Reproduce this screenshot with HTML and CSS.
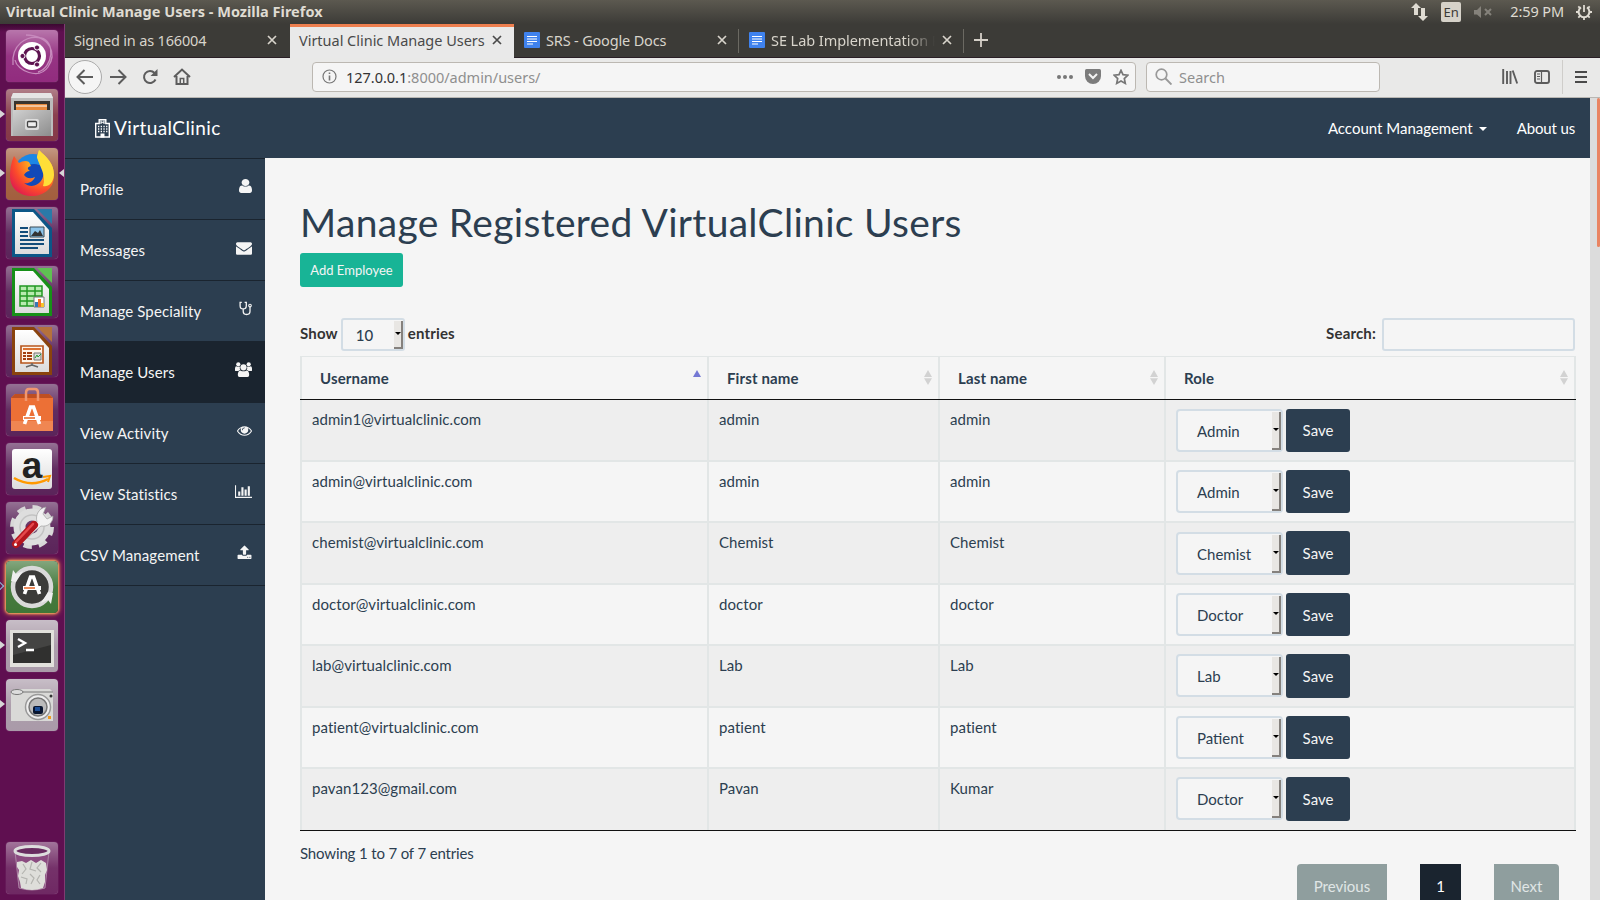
FILE: index.html
```html
<!DOCTYPE html>
<html lang="en">
<head>
<meta charset="utf-8">
<title>Virtual Clinic Manage Users</title>
<link rel="stylesheet" href="styles.css">
</head>
<body>
<svg class="defs" width="0" height="0">
  <defs>
    <linearGradient id="gloss" x1="0" y1="0" x2="0" y2="1"><stop offset="0" stop-color="#fff" stop-opacity=".38"/><stop offset=".5" stop-color="#fff" stop-opacity=".08"/><stop offset="1" stop-color="#fff" stop-opacity=".04"/></linearGradient>
    <linearGradient id="metal" x1="0" y1="0" x2="1" y2="1"><stop offset="0" stop-color="#d0d0d0"/><stop offset="1" stop-color="#8d8d8d"/></linearGradient>
    <linearGradient id="paper" x1="0" y1="0" x2="0" y2="1"><stop offset="0" stop-color="#fff"/><stop offset="1" stop-color="#dcdcdc"/></linearGradient>
    <radialGradient id="fox" cx=".75" cy=".2" r=".9"><stop offset="0" stop-color="#fff04a"/><stop offset=".4" stop-color="#ffa01f"/><stop offset=".75" stop-color="#fb4a2b"/><stop offset="1" stop-color="#e2204c"/></radialGradient>
    <symbol id="x" viewBox="0 0 10 10"><path d="M1 1l8 8M9 1l-8 8" fill="none" stroke="currentColor" stroke-width="1.7"/></symbol>
    <symbol id="doc" viewBox="0 0 16 16"><rect width="16" height="16" rx="1" fill="#3f82ee"/><path d="M3 4.5h10M3 7h10M3 9.5h10M3 12h6" stroke="#fff" stroke-width="1.2"/></symbol>
    <symbol id="sort" viewBox="0 0 8 15"><path d="M4 0l4 7H0zM4 15L0 8.2h8z" fill="#d2d2d2"/></symbol>
  </defs>
</svg>
<header class="panel">
  <span class="window-title">Virtual Clinic Manage Users - Mozilla Firefox</span>
  <div class="tray">
    <svg width="17" height="18" viewBox="0 0 17 18"><path d="M5 0l5 5H7v7H3V5H0zM12 18l-5-5h3V5h4v8h3z" fill="#dfdbd2"/></svg>
    <span class="lang">En</span>
    <svg class="mute" width="18" height="12" viewBox="0 0 18 12"><path d="M0 4h3l4-4v12L3 8.500H0z" fill="#85827b"/><path d="M11 3l6 6M17 3l-6 6" stroke="#85827b" stroke-width="2"/></svg>
    <span class="clock">2:59 PM</span>
    <svg width="16" height="16" viewBox="0 0 16 16" fill="none" stroke="#dfdbd2"><path d="M5 3.300a5.400 5.400 0 1 0 6 0" stroke-width="2"/><path d="M8 1v7M8 13v3M0 8h3M13 8h3M2.300 13.700l2-2M13.700 13.700l-2-2M2.300 2.300l2 2M13.700 2.300l-2 2" stroke-width="1.8"/></svg>
  </div>
</header>
<div class="desktop">
<nav class="launcher">
  <svg class="tile" viewBox="0 0 52 52"><rect width="52" height="52" rx="4" fill="#8d2379"/><rect width="52" height="52" rx="4" fill="url(#gloss)"/><path d="M7 35C5 15 20 5 35 8s12 30-3 34M20 5c25 1 31 19 22 32s-31 4-33-7" fill="none" stroke="#c78abd" stroke-width="1.300"/><circle cx="26" cy="26" r="14" fill="#fff"/><circle cx="26" cy="26" r="7.500" fill="none" stroke="#5d1450" stroke-width="3.200"/><g fill="#5d1450" stroke="#fff" stroke-width="1"><circle cx="16.500" cy="26" r="2.600"/><circle cx="31" cy="17.500" r="2.600"/><circle cx="31" cy="34.500" r="2.600"/></g></svg>
  <svg class="tile" viewBox="0 0 52 52"><rect width="52" height="52" rx="4" fill="#803040"/><rect width="52" height="52" rx="4" fill="url(#gloss)"/><path d="M7 4h38l2 5v38H5V9z" fill="#bcbcbc"/><path d="M7 4h38l2 5H5z" fill="#e5e5e5"/><path d="M8 12h36v11H8z" fill="#39342f"/><path d="M10 15h31v8H10z" fill="#e88a3c"/><path d="M10 17h31" stroke="#fff" stroke-width="1"/><path d="M7 21h38v26H7z" fill="url(#metal)"/><rect x="19" y="30" width="14" height="11" rx="2" fill="#ddd"/><rect x="21.500" y="32.500" width="9" height="5.500" rx="1" fill="#eee" stroke="#444" stroke-width="1.300"/></svg>
  <svg class="tile" viewBox="0 0 52 52"><rect width="52" height="52" rx="4" fill="#9f5836"/><rect width="52" height="52" rx="4" fill="url(#gloss)"/><circle cx="27" cy="25" r="19" fill="#1c87e5"/><circle cx="28" cy="29" r="13" fill="#1249b8"/><path d="M8 8l5 7c3-2 7-3 10-1l2 4c-4 1-4 3-1 5-3 0-5 2-6 4 3 4 7 4 11 2-2 5-7 7-11 6 10 8 22-2 19-13-1-5-5-9-6-13l2-7c8 8 15 13 15 26 0 12-10 20-22 20S4 41 4 28c0-7 1-13 4-20z" fill="url(#fox)"/><path d="M31 9l2-7c8 8 15 13 15 25-1 9-6 12-11 11 4-11-4-20-6-29z" fill="#ffdf38"/></svg>
  <svg class="tile" viewBox="0 0 52 52"><rect width="52" height="52" rx="4" fill="#541b53"/><rect width="52" height="52" rx="4" fill="url(#gloss)"/><path d="M6 2h22l18 19v29H6z" fill="#0c5787"/><path d="M9 5h18l16 18v24H9z" fill="url(#paper)"/><path d="M31 2h15v15z" fill="#2a7aa8"/><path d="M14 21h8M14 25h8M14 29h8M14 33h24M14 37h24M14 41h18" stroke="#134d7a" stroke-width="2"/><path d="M24 20h14v10H24z" fill="#8cc4ea" stroke="#3a4a55"/><path d="M25 29l4-5 3 2 2-3 3 6z" fill="#333"/></svg>
  <svg class="tile" viewBox="0 0 52 52"><rect width="52" height="52" rx="4" fill="#541b53"/><rect width="52" height="52" rx="4" fill="url(#gloss)"/><path d="M6 2h22l18 19v29H6z" fill="#179018"/><path d="M9 5h18l16 18v24H9z" fill="url(#paper)"/><path d="M31 2h15v15z" fill="#5fc152"/><path d="M14 20h22v20H14zM14 25h22M14 30h22M14 35h22M21 20v20M29 20v20" fill="#b8ebaf" stroke="#229823" stroke-width="1.500"/><path d="M28 31h10v10H28z" fill="#fff" stroke="#777"/><path d="M29 36h3v5h-3z" fill="#3977b5"/><path d="M32 33h3v8h-3z" fill="#f4712b"/><path d="M35 37h3v4h-3z" fill="#f9c42c"/></svg>
  <svg class="tile" viewBox="0 0 52 52"><rect width="52" height="52" rx="4" fill="#541b53"/><rect width="52" height="52" rx="4" fill="url(#gloss)"/><path d="M6 2h22l18 19v29H6z" fill="#8a430d"/><path d="M9 5h18l16 18v24H9z" fill="url(#paper)"/><path d="M31 2h15v15z" fill="#b5713c"/><path d="M15 21h22v17H15z" fill="#fff4e8" stroke="#b8571e" stroke-width="1.700"/><path d="M17 24h18" stroke="#db7131" stroke-width="2"/><path d="M17 28h3M17 31h3M17 34h3M21 28h5M21 31h5M21 34h5" stroke="#a34010" stroke-width="2"/><path d="M28 28h7v7h-7z" fill="#ddd" stroke="#777"/><path d="M29 33l2-3 1 2 3-3" fill="none" stroke="#23a030"/><path d="M26 38v2l-6 2M26 40l6 2" fill="none" stroke="#666" stroke-width="1.600"/></svg>
  <svg class="tile" viewBox="0 0 52 52"><rect width="52" height="52" rx="4" fill="#541b53"/><rect width="52" height="52" rx="4" fill="url(#gloss)"/><path d="M5 14l4-4h34l4 4v33H5z" fill="#ec7036"/><path d="M5 14l4-4h34l4 4z" fill="#bf4f22"/><path d="M5 37h42v10H5z" fill="#f08652"/><path d="M20 17V9q0-4 3-4h6q3 0 3 4v8" fill="none" stroke="#f09770" stroke-width="2.500"/><path d="M18.500 40l6-17h3l6 17" fill="none" stroke="#fff" stroke-width="3.600"/><path d="M17 34h18" stroke="#fff" stroke-width="4"/><path d="M18 34h11" stroke="#e76525" stroke-width="1.600"/></svg>
  <svg class="tile" viewBox="0 0 52 52"><rect width="52" height="52" rx="4" fill="#541b53"/><rect width="52" height="52" rx="4" fill="url(#gloss)"/><rect x="6" y="6" width="40" height="40" rx="3" fill="url(#paper)"/><text x="26" y="34.500" text-anchor="middle" class="amazon-a">a</text><path d="M8 35q17 10 34 1" fill="none" stroke="#ff9900" stroke-width="2.500"/><path d="M37 34l7-1-2 6" fill="none" stroke="#ff9900" stroke-width="2"/></svg>
  <svg class="tile" viewBox="0 0 52 52"><rect width="52" height="52" rx="4" fill="#541b53"/><rect width="52" height="52" rx="4" fill="url(#gloss)"/><circle cx="26" cy="25" r="19.500" fill="none" stroke="#d8d8d8" stroke-width="5" stroke-dasharray="8.300 7"/><circle cx="26" cy="25" r="12.500" fill="none" stroke="#dedede" stroke-width="12"/><circle cx="26" cy="25" r="12" fill="none" stroke="#c3c3c3" stroke-width="1.500"/><path d="M31 20c-2-7 2-14 9-15l-3 7 4 5 6-3c0 7-5 11-12 10L19 38l-5-3z" fill="#f2f2f2" stroke="#a0a0a0" stroke-width=".7"/><path d="M28 23L10 42" stroke="#b4161e" stroke-width="8" stroke-linecap="round"/><path d="M27 22L10 40" stroke="#e5484c" stroke-width="2.500" stroke-linecap="round"/><circle cx="9.500" cy="42.500" r="1.500" fill="#fff"/></svg>
  <svg class="tile glow" viewBox="0 0 52 52"><rect width="52" height="52" rx="4" fill="#38702f"/><rect width="52" height="52" rx="4" fill="url(#gloss)"/><circle cx="26" cy="26" r="19" fill="#3b3b39" stroke="#d9d9d9" stroke-width="4.500"/><path d="M5 20l2-11 3 4 7-3-7 11zM47 32l-2 11-3-4-7 3 7-11z" fill="#eee"/><path d="M18.500 33l6-17h3l6 17" fill="none" stroke="#fff" stroke-width="3.600"/><path d="M17 27h18" stroke="#fff" stroke-width="4"/><path d="M18 27h11" stroke="#e76525" stroke-width="1.600"/></svg>
  <svg class="tile" viewBox="0 0 52 52"><rect width="52" height="52" rx="4" fill="#a696a5"/><rect width="52" height="52" rx="4" fill="url(#gloss)"/><rect x="4" y="10" width="44" height="37" fill="#e2e1dc"/><rect x="7" y="13" width="38" height="30" fill="#30302f"/><path d="M7 13h38v12L7 35z" fill="#444443"/><path d="M12 19l7 4-7 4M20 30h8" fill="none" stroke="#fff" stroke-width="2.400"/></svg>
  <svg class="tile" viewBox="0 0 52 52"><rect width="52" height="52" rx="4" fill="#a696a5"/><rect width="52" height="52" rx="4" fill="url(#gloss)"/><path d="M5 13l4-3h35l3 3v29H5z" fill="#d9d9d7"/><path d="M5 13h42" stroke="#777" stroke-width="1"/><ellipse cx="11" cy="13" rx="6" ry="2.500" fill="#ddd" stroke="#777"/><circle cx="32" cy="28" r="12.500" fill="#eee" stroke="#999" stroke-width="1.500"/><circle cx="32" cy="28" r="9" fill="#bbb" stroke="#777" stroke-width="1.500"/><rect x="27" y="27" width="10" height="8" rx="2" fill="#08152f"/><rect x="29" y="28" width="5" height="4" fill="#1d4f98"/><circle cx="45" cy="17" r="1.500" fill="#333"/><rect x="42" y="37" width="3" height="3" fill="#ef9a1d"/></svg>
  <svg class="tile trash" viewBox="0 0 52 52"><rect width="52" height="52" rx="4" fill="#69205d"/><rect width="52" height="52" rx="4" fill="url(#gloss)"/><path d="M9 9l4 37q13 4 26 0l4-37z" fill="#8b4b80" stroke="#ad85a5"/><path d="M11 20l5-1 4 2 5-3 5 3 5-3 5 3 1 7-2 5v7l-2 6q-11 4-22 0l-1-6-2-6 1-6-2-3z" fill="#dededa"/><path d="M17 22l3 5-4 5M26 20l-2 7 6 2M35 21l-4 5 4 4M15 35l6 2-1 5M24 32l4 4-3 6M34 33l-3 5 3 4" fill="none" stroke="#b4b4b0" stroke-width="1.200"/><ellipse cx="26" cy="9" rx="17" ry="4.500" fill="#682b60" stroke="#ddd" stroke-width="3"/></svg>
  <i class="pip p1"></i><i class="pip p2"></i><i class="pip p3"></i><i class="pip p4"></i><i class="focus-pip"></i><i class="run-pip"></i>
</nav>
<div class="browser">
  <div class="tabs">
    <div class="tab first"><span class="t1">Signed in as 166004</span><svg class="close"><use href="#x"/></svg></div>
    <div class="tab active"><span class="t2">Virtual Clinic Manage Users</span><svg class="close"><use href="#x"/></svg></div>
    <div class="tab sep"><svg class="doc"><use href="#doc"/></svg><span class="t3">SRS - Google Docs</span><svg class="close"><use href="#x"/></svg></div>
    <div class="tab sep"><svg class="doc"><use href="#doc"/></svg><span class="t4">SE Lab Implementation P</span><svg class="close"><use href="#x"/></svg></div>
    <svg class="plus" width="14" height="14" viewBox="0 0 14 14"><path d="M7 0v14M0 7h14" stroke="#d5d0c8" stroke-width="1.800"/></svg>
  </div>
  <div class="toolbar">
    <span class="back"><svg width="18" height="16" viewBox="0 0 18 16"><path d="M17 8H2M8.500 1L1.500 8l7 7" class="ln"/></svg></span>
    <svg class="fwd" width="18" height="16" viewBox="0 0 18 16"><path d="M1 8h15M9.500 1l7 7-7 7" class="ln"/></svg>
    <svg class="reload" width="16" height="16" viewBox="0 0 16 16"><path d="M13.500 10.500A6 6 0 1 1 12.500 4" class="ln"/><path d="M15.500 0v7h-7z" fill="#5c5c5c"/></svg>
    <svg class="home" width="18" height="17" viewBox="0 0 18 17"><path d="M1 9l8-7.500L17 9M3.500 8v8h11V8" class="ln"/><path d="M7.300 16v-5.500h3.400V16" class="ln thin"/></svg>
    <div class="url">
      <svg width="15" height="15" viewBox="0 0 15 15"><circle cx="7.500" cy="7.500" r="6.500" fill="none" stroke="#777" stroke-width="1.200"/><path d="M7.500 6.500v5M7.500 3.500v1.600" stroke="#777" stroke-width="1.600"/></svg>
      <span class="addr"><b>127.0.0.1</b>:8000/admin/users/</span>
      <svg class="dots" width="16" height="4" viewBox="0 0 16 4"><g fill="#777"><circle cx="2" cy="2" r="2"/><circle cx="8" cy="2" r="2"/><circle cx="14" cy="2" r="2"/></g></svg>
      <svg class="pocket" width="16" height="15" viewBox="0 0 16 15"><path d="M1.500 0h13Q16 0 16 1.500V7a8 8 0 0 1-16 0V1.500Q0 0 1.500 0z" fill="#7c7c7c"/><path d="M4 5l4 4 4-4" fill="none" stroke="#f5f5f5" stroke-width="2"/></svg>
      <svg class="star" width="16" height="16" viewBox="0 0 16 16"><path d="M8 1.300l2 4.400 4.900.5-3.600 3.300 1 4.900L8 12l-4.300 2.400 1-4.900L1.100 6.200 6 5.700z" fill="none" stroke="#777" stroke-width="1.700"/></svg>
    </div>
    <div class="searchbox"><svg width="17" height="17" viewBox="0 0 17 17"><circle cx="6.500" cy="6.500" r="5.300" fill="none" stroke="#999" stroke-width="1.700"/><path d="M10.500 10.500l6 6" stroke="#999" stroke-width="1.900"/></svg><span>Search</span></div>
    <div class="tools">
      <svg width="16" height="15" viewBox="0 0 16 15"><path d="M1.200 0v15M5 2v13M8.500 2v13M10.700 1.500L15.200 14.500" stroke="#5c5c5c" stroke-width="1.900"/></svg>
      <svg class="panelicon" width="16" height="14" viewBox="0 0 16 14"><rect x="1" y="1" width="14" height="12" rx="2" fill="none" stroke="#5c5c5c" stroke-width="1.900"/><path d="M7.500 1v12M3 4h3M3 6.500h3M3 9h3" stroke="#5c5c5c" stroke-width="1.200"/></svg>
      <i class="vline"></i>
      <svg width="12" height="12" viewBox="0 0 12 12"><path d="M0 1h12M0 6h12M0 11h12" stroke="#4a4a4a" stroke-width="1.900"/></svg>
    </div>
  </div>
  <div class="viewport">
    <div class="page">
      <div class="navbar">
        <div class="brand"><svg width="15" height="19" viewBox="0 0 15 19"><path d="M.7 18V4.500h3.500V.7h6.600v3.800h3.500V18z" fill="none" stroke="#fff" stroke-width="1.400"/><path d="M6 1.500v3.500M9 1.500v3.500M6 3.200h3" stroke="#fff" stroke-width="1.100"/><path d="M3 7.500h9.500M3 10h9.500M3 12.500h9.500" stroke="#fff" stroke-width="1.300" stroke-dasharray="1.300 1.400"/><path d="M5.500 18.500v-4h4v4" fill="#fff"/></svg><span>VirtualClinic</span></div>
        <div class="navlinks"><span class="acct">Account Management</span><i class="caret"></i><span class="about">About us</span></div>
      </div>
      <div class="body">
        <ul class="sidebar">
          <li><span>Profile</span><svg width="13" height="14" viewBox="256 128 1280 1536" preserveAspectRatio="none"><path d="M1536 1399q0 109-62.500 187t-150.500 78h-854q-88 0-150.500-78t-62.500-187q0-85 8.500-160.500t31.500-152 58.500-131 94-89 134.500-34.500q131 128 313 128t313-128q76 0 134.500 34.500t94 89 58.500 131 31.500 152 8.500 160.500zm-256-887q0 159-112.500 271.500t-271.500 112.500-271.500-112.500-112.500-271.500 112.500-271.500 271.500-112.500 271.500 112.500 112.500 271.500z"/></svg></li>
          <li><span>Messages</span><svg width="16" height="16" viewBox="0 0 1792 1792"><path d="M1792 710v794q0 66-47 113t-113 47h-1472q-66 0-113-47t-47-113v-794q44 49 101 87 362 246 497 345 57 42 92.500 65.500t94.500 48 110 24.500h2q51 0 110-24.500t94.500-48 92.500-65.500q170-123 498-345 57-39 100-87zm0-294q0 79-49 151t-122 123q-376 261-468 325-10 7-42.500 31t-54 38.500-52 32.500-57.500 27-50 9h-2q-23 0-50-9t-57.500-27-52-32.500-54-38.500-42.500-31q-91-64-262-182.500t-205-142.500q-62-42-117-115.500t-55-136.500q0-78 41.500-130t118.500-52h1472q65 0 112.500 47t47.500 113z"/></svg></li>
          <li><span>Manage Speciality</span><svg width="13" height="15" viewBox="0 0 13 15"><path d="M2.800 1.400H1.100v3.300q0 3.200 3.100 3.200t3.100-3.200V1.400H5.600M4.200 8v2.300q0 3.200 3.400 3.200T11 10.300V6" fill="none" stroke="#f5f5f5" stroke-width="1.300"/><circle cx="11" cy="4.600" r="1.300" fill="none" stroke="#f5f5f5" stroke-width="1.100"/></svg></li>
          <li class="current"><span>Manage Users</span><svg width="17" height="15" viewBox="0 0 17 15"><circle cx="3.300" cy="2.300" r="2.100"/><circle cx="13.700" cy="2.300" r="2.100"/><path d="M0 8.800V6.500Q0 4.300 1.500 4.300q2 1 3.500.2-.7 2 .4 3.600-1.200 0-1.900.9H.5zM17 8.800V6.500q0-2.200-1.500-2.200-2 1-3.500.2.700 2-.4 3.600 1.200 0 1.900.9h3z"/><circle cx="8.500" cy="5.300" r="3.100"/><path d="M2.800 13q0-4.400 2.700-4.600 3 1.900 6 0 2.700.2 2.700 4.600 0 2-1.700 2h-8q-1.700 0-1.700-2z"/></svg></li>
          <li><span>View Activity</span><svg width="15" height="15" viewBox="0 0 1792 1792"><path d="M1664 960q-152-236-381-353 61 104 61 225 0 185-131.500 316.500t-316.500 131.500-316.500-131.500-131.500-316.500q0-121 61-225-229 117-381 353 133 205 333.500 326.500t434.500 121.500 434.500-121.500 333.500-326.500zm-720-384q0-20-14-34t-34-14q-125 0-214.500 89.500t-89.500 214.500q0 20 14 34t34 14 34-14 14-34q0-86 61-147t147-61q20 0 34-14t14-34zm848 384q0 34-20 69-140 230-376.500 368.500t-499.500 138.500-499.500-139-376.500-368q-20-35-20-69t20-69q140-229 376.500-368t499.500-139 499.500 139 376.500 368q20 35 20 69z"/></svg></li>
          <li><span>View Statistics</span><svg width="17" height="15" viewBox="0 0 2048 1792"><path d="M640 896v512h-256v-512h256zm384-512v1024h-256v-1024h256zm1024 1152v128h-2048v-1536h128v1408h1920zm-640-896v768h-256v-768h256zm384-384v1152h-256v-1152h256z"/></svg></li>
          <li><span>CSV Management</span><svg width="15" height="15" viewBox="64 0 1664 1792"><path d="M1344 1472q0-26-19-45t-45-19-45 19-19 45 19 45 45 19 45-19 19-45zm256 0q0-26-19-45t-45-19-45 19-19 45 19 45 45 19 45-19 19-45zm128-224v320q0 40-28 68t-68 28h-1472q-40 0-68-28t-28-68v-320q0-40 28-68t68-28h427q21 56 70.500 92t110.500 36h256q61 0 110.500-36t70.500-92h427q40 0 68 28t28 68zm-325-648q-17 40-59 40h-256v448q0 26-19 45t-45 19h-256q-26 0-45-19t-19-45v-448h-256q-42 0-59-40-17-39 14-69l448-448q18-19 45-19t45 19l448 448q31 30 14 69z"/></svg></li>
        </ul>
        <main class="content">
          <h1>Manage Registered VirtualClinic Users</h1>
          <span class="add">Add Employee</span>
          <div class="controls">
            <div class="length"><b>Show</b><span class="select small"><span>10</span><i class="arrow"></i></span><b>entries</b></div>
            <div class="filter"><b>Search:</b><span class="input"></span></div>
          </div>
          <div class="table">
            <div class="row head"><div>Username<i class="asc"></i></div><div>First name<svg class="sort"><use href="#sort"/></svg></div><div>Last name<svg class="sort"><use href="#sort"/></svg></div><div>Role<svg class="sort"><use href="#sort"/></svg></div></div>
            <div class="row tall lead"><div>admin1@virtualclinic.com</div><div>admin</div><div>admin</div><div><span class="select"><span>Admin</span><i class="arrow"></i></span><span class="save">Save</span></div></div>
            <div class="row"><div>admin@virtualclinic.com</div><div>admin</div><div>admin</div><div><span class="select"><span>Admin</span><i class="arrow"></i></span><span class="save">Save</span></div></div>
            <div class="row tall"><div>chemist@virtualclinic.com</div><div>Chemist</div><div>Chemist</div><div><span class="select low"><span>Chemist</span><i class="arrow"></i></span><span class="save long">Save</span></div></div>
            <div class="row"><div>doctor@virtualclinic.com</div><div>doctor</div><div>doctor</div><div><span class="select"><span>Doctor</span><i class="arrow"></i></span><span class="save">Save</span></div></div>
            <div class="row tall"><div>lab@virtualclinic.com</div><div>Lab</div><div>Lab</div><div><span class="select"><span>Lab</span><i class="arrow"></i></span><span class="save long">Save</span></div></div>
            <div class="row"><div>patient@virtualclinic.com</div><div>patient</div><div>patient</div><div><span class="select"><span>Patient</span><i class="arrow"></i></span><span class="save">Save</span></div></div>
            <div class="row tall last"><div>pavan123@gmail.com</div><div>Pavan</div><div>Kumar</div><div><span class="select"><span>Doctor</span><i class="arrow"></i></span><span class="save long">Save</span></div></div>
          </div>
          <div class="footer"><span class="info">Showing 1 to 7 of 7 entries</span>
            <div class="pager"><span class="prev">Previous</span><span class="num">1</span><span class="next">Next</span></div></div>
        </main>
      </div>
    </div>
    <div class="scroll"><i></i></div>
  </div>
</div>
</div>
</body>
</html>
```

FILE: styles.css
```css
* { box-sizing: border-box; }
body { margin: 0; width: 1600px; height: 900px; overflow: hidden; font-family: Lato, sans-serif; font-size: 15px; color: #2c3e50; background: #f5f5f5; }
.defs { display: block; position: absolute; }
svg { display: block; flex: none; }
span { white-space: nowrap; }

.panel { height: 24px; display: flex; justify-content: space-between; align-items: center; padding: 0 8px 0 6px; background: linear-gradient(#5c5950, #3c3b37); color: #dfdbd2; font-family: "Noto Sans", sans-serif; }
.window-title { font-weight: 700; font-size: 14.5px; letter-spacing: .02px; line-height: 20px; padding-bottom: 2px; }
.tray { display: flex; align-items: center; }
.lang { width: 20px; height: 20px; margin-left: 13px; border-radius: 2px; background: #d6d2c9; color: #3c3b37; font-size: 13px; line-height: 20px; text-align: center; }
.mute { margin-left: 13px; }
.clock { margin: 0 12px 2px 18px; font-size: 14.5px; letter-spacing: -.1px; }

.desktop { display: flex; height: 876px; }
.launcher { position: relative; width: 65px; display: flex; flex-direction: column; gap: 7px; padding: 6px 0 0 6px; background: linear-gradient(#3b0831, #5f0f50 8px); border-right: 1px solid #7f3b72; }
.tile { width: 52px; height: 52px; border-radius: 4px; box-shadow: inset 0 0 0 1px #8e5484, 0 0 1px #a578a0; }
.trash { margin-top: 104px; }
.glow { box-shadow: 0 0 2px 1px #f0a060, 0 0 5px 1px #e8814e; }
.amazon-a { font: 700 37px "Liberation Sans", Arial, sans-serif; fill: #222; }
.pip { position: absolute; left: 0; border: solid transparent; border-width: 4px 0 4px 5px; border-left-color: #d6d6d6; }
.p1 { top: 86px; } .p2 { top: 145px; } .p3 { top: 617px; } .p4 { top: 676px; }
.focus-pip { position: absolute; right: 0; top: 145px; border: solid transparent; border-width: 4px 5px 4px 0; border-right-color: #d6d6d6; }
.run-pip { position: absolute; left: -3px; top: 559px; width: 6px; height: 6px; border: solid #8bb8dc; border-width: 1px 1px 0 0; transform: rotate(45deg); }

.browser { width: 1535px; }
.tabs { height: 34px; display: flex; background: #3c3b37; border-bottom: 1px solid #2a1f26; font: 14.5px "Noto Sans", sans-serif; color: #d8d4cb; }
.tab { width: 225px; height: 34px; display: flex; align-items: center; padding: 0 13px 2px 9px; }
.tab.active { width: 224px; background: #e9e9e9; color: #4a4a4a; border-top: 3px solid #ee7f4f; padding: 0 12px 5px 9px; }
.tab.sep { padding-left: 10px; padding-right: 12px; position: relative; }
.tab.sep::after { content: ""; position: absolute; right: 0; top: 5px; width: 1px; height: 24px; background: #6b6962; }
.close { width: 10px; height: 10px; margin-left: auto; }
.doc { width: 16px; height: 16px; margin-right: 6px; }
.plus { margin: 9px 0 0 10px; }
.t1 { letter-spacing: -.17px; }
.t2 { letter-spacing: -.02px; }
.t3 { letter-spacing: -.17px; }
.t4 { width: 164px; overflow: hidden; letter-spacing: -.06px; -webkit-mask-image: linear-gradient(90deg, #000 135px, transparent 164px); mask-image: linear-gradient(90deg, #000 135px, transparent 164px); }

.toolbar { height: 40px; display: flex; align-items: center; padding: 0 13px 2px 3px; background: #e9e9e8; border-bottom: 1px solid #b9b7b3; font: 14.5px "Noto Sans", sans-serif; }
.back { width: 34px; height: 34px; display: flex; align-items: center; justify-content: center; border: 1px solid #aaa; border-radius: 50%; background: #f5f5f5; }
.ln { fill: none; stroke: #5c5c5c; stroke-width: 2; }
.thin { stroke-width: 1.500; }
.fwd { margin-left: 7px; }
.reload { margin-left: 15px; }
.home { margin-left: 15px; }
.url { width: 824px; height: 30px; margin-left: 121px; display: flex; align-items: center; padding: 0 6px 0 9px; border: 1px solid #bcb8b2; border-radius: 4px; background: #f5f5f5; color: #8f8f8f; }
.addr { margin-left: 9px; letter-spacing: -.02px; }
.addr b { font-weight: 400; color: #333; }
.dots { margin-left: auto; }
.pocket { margin-left: 12px; }
.star { margin-left: 12px; }
.searchbox { width: 234px; height: 30px; margin-left: 10px; display: flex; align-items: center; gap: 7px; padding-left: 8px; border: 1px solid #bcb8b2; border-radius: 4px; background: #f5f5f5; color: #8f8f8f; }
.tools { margin-left: auto; display: flex; align-items: center; }
.panelicon { margin-left: 16px; }
.vline { width: 1px; height: 34px; margin: 0 12px; background: #cfcdca; }

.viewport { height: 802px; display: flex; overflow: hidden; }
.page { width: 1525px; }
.scroll { width: 10px; background: #dcdcdc; padding-left: 7px; }
.scroll i { display: block; height: 149px; background: #e98462; border-radius: 2px; }
.navbar { height: 60px; display: flex; justify-content: space-between; padding: 0 15px 0 30px; background: #2c3e50; color: #fff; }
.brand { display: flex; align-items: center; gap: 4px; font-size: 19px; letter-spacing: .4px; }
.brand span { padding-bottom: 2px; }
.navlinks { display: flex; align-items: center; }
.caret { margin: 2px 30px 0 6px; border: solid transparent; border-width: 4px 4px 0; border-top-color: #fff; }
.about { letter-spacing: -.15px; }

.body { display: flex; height: 742px; }
.sidebar { width: 200px; margin: 0; padding: 0; list-style: none; background: #2c3e50; color: #f5f5f5; letter-spacing: .12px; }
.sidebar li { height: 61px; display: flex; justify-content: space-between; padding: 20px 13px 0 15px; border-top: 1px solid #1a242f; line-height: 20px; }
.sidebar li:last-child { height: 62px; border-bottom: 1px solid #1a242f; }
.sidebar li svg { fill: #f5f5f5; }
.sidebar .current { background: #1a242f; }

.content { width: 1325px; padding: 43px 13px 0 35px; }
h1 { margin: 0; height: 52px; font-size: 39px; letter-spacing: .31px; line-height: 43px; font-weight: 400; white-space: nowrap; }
.add { display: block; width: 103px; height: 34px; line-height: 34px; text-align: center; font-size: 13px; color: #f5f5f5; background: #18b496; border-radius: 3px; }
.controls { display: flex; justify-content: space-between; margin-top: 31px; height: 38px; padding-right: 2px; color: #333; }
.length, .filter { display: flex; height: 33px; line-height: 30px; letter-spacing: .16px; }
.select { position: relative; width: 107px; height: 43px; margin-right: 3px; display: block; padding-left: 19px; line-height: 40px; border: 2px solid #d3dde5; border-radius: 4px; color: #2c3e50; background: #f5f5f5; }
.arrow { position: absolute; right: 0; top: 1px; bottom: 0; width: 9px; background: #e8e6e3; border: solid #85817d; border-width: 0 2px 2px 0; }
.arrow::after { content: ""; position: absolute; left: 1px; top: 50%; margin-top: -2px; border: solid transparent; border-width: 3px 3px 0; border-top-color: #000; }
.select.small { width: 64px; height: 33px; margin: 0 3px 0 3px; padding-left: 13px; line-height: 30px; border-radius: 3px; font-weight: 500; letter-spacing: 0; }
.input { display: block; width: 193px; height: 33px; margin-left: 6px; border: 2px solid #d3dde5; border-radius: 3px; }

.table { width: 1276px; border-top: 1px solid #e2e6e6; }
.row { display: grid; grid-template-columns: 407px 231px 226px 412px; height: 61px; border-bottom: 2px solid #e2e6e6; }
.row > div { position: relative; padding: 9px 10px 0; border-left: 2px solid #e2e6e6; line-height: 21px; letter-spacing: .06px; }
.row > div:last-child { display: flex; padding-top: 8px; border-right: 2px solid #e2e6e6; letter-spacing: 0; }
.tall { height: 62px; background: #eee; }
.lead > div { padding-top: 9px; }
.row.lead > div:last-child { padding-top: 9px; }
.last { border-bottom: 1px solid #111; }
.head { height: 43px; border-bottom: 1px solid #111; font-weight: 700; }
.row.head > div, .row.head > div:last-child { padding: 11px 18px 0; letter-spacing: .14px; }
.sort { position: absolute; right: 6px; top: 13px; width: 8px; height: 15px; }
.asc { position: absolute; right: 6px; top: 13px; border: solid transparent; border-width: 0 4px 7px; border-bottom-color: #7478d4; }
.low { margin-top: 1px; }
.save { display: block; width: 64px; height: 43px; line-height: 44px; text-align: center; color: #f5f5f5; background: #2c3e50; border-radius: 3px; }
.lead .save { line-height: 43px; }
.save.long { height: 44px; }
.footer { display: flex; justify-content: space-between; }
.info { padding-top: 12px; line-height: 20px; letter-spacing: -.15px; }
.pager { display: flex; gap: 33px; margin: 33px 18px 0 0; line-height: 45px; text-align: center; color: #e0e6e6; }
.pager span { height: 45px; background: #8f9e9e; }
.pager .prev { width: 90px; border-radius: 4px 0 0 4px; }
.pager .num { width: 41px; background: #1a242f; color: #fff; }
.pager .next { width: 65px; border-radius: 0 4px 4px 0; }
```
